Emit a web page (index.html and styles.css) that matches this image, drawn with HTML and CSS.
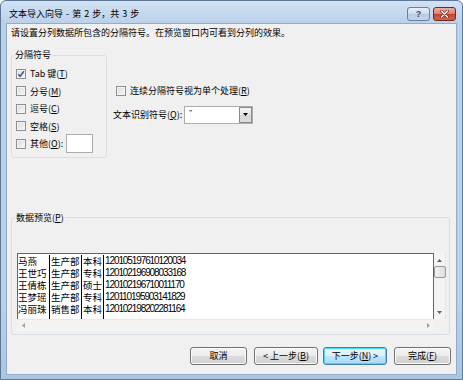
FILE: index.html
```html
<!DOCTYPE html>
<html>
<head>
	<meta charset="utf-8">
	<link rel="stylesheet" href="styles.css">
</head>
<body>
	<div class="window">
		<div class="titlebar">
			<span class="title">文本导入向导 - 第 2 步，共 3 步</span>
			<div class="captionButtons">
				<span class="cbtn help">?</span>
				<span class="cbtn close">
					<svg width="9" height="8" viewBox="0 0 9 8"><path d="M1.5 1 L7.5 7 M7.5 1 L1.5 7" stroke="#6a2a22" stroke-width="2.6" stroke-linecap="round"/><path d="M1.5 1 L7.5 7 M7.5 1 L1.5 7" stroke="#fff" stroke-width="1.4" stroke-linecap="round"/></svg>
				</span>
			</div>
		</div>

		<div class="client">
			<p class="desc">请设置分列数据所包含的分隔符号。在预览窗口内可看到分列的效果。</p>

			<div class="topSection">
				<fieldset class="group delimiters">
					<legend>分隔符号</legend>
					<label class="opt"><span class="cb"><svg width="8" height="8" viewBox="0 0 8 8"><path d="M1.2 4.2 L3.2 6.3 L6.9 1.2" fill="none" stroke="#3d5b91" stroke-width="1.5"/></svg></span>Tab 键(<u>T</u>)</label>
					<label class="opt"><span class="cb"></span>分号(<u>M</u>)</label>
					<label class="opt"><span class="cb"></span>逗号(<u>C</u>)</label>
					<label class="opt"><span class="cb"></span>空格(<u>S</u>)</label>
					<label class="opt"><span class="cb"></span>其他(<u>O</u>):<span class="textbox"></span></label>
				</fieldset>

				<div class="sideOptions">
					<label class="opt consecutive"><span class="cb"></span>连续分隔符号视为单个处理(<u>R</u>)</label>
					<div class="qualifier">
						<span>文本识别符号(<u>Q</u>):</span>
						<div class="combo">
							<span class="comboValue">"</span>
							<span class="comboDrop"><svg width="5" height="3" viewBox="0 0 5 3"><path d="M0 0 H5 L2.5 3 Z" fill="#000"/></svg></span>
						</div>
					</div>
				</div>
			</div>

			<fieldset class="group preview">
				<legend>数据预览(<u>P</u>)</legend>
				<div class="previewBox">
					<div class="previewMain">
						<div class="dataArea">
							<div class="col c1"><div>马燕</div><div>王世巧</div><div>王倩栋</div><div>王梦瑶</div><div>冯丽珠</div></div>
							<div class="col c2"><div>生产部</div><div>生产部</div><div>生产部</div><div>生产部</div><div>销售部</div></div>
							<div class="col c3"><div>本科</div><div>专科</div><div>硕士</div><div>专科</div><div>本科</div></div>
							<div class="col c4"><div>120105197610120034</div><div>120102196908033168</div><div>120102196710011170</div><div>120110195903141829</div><div>120102198202281164</div></div>
						</div>
						<div class="vscroll">
							<svg width="5" height="3" viewBox="0 0 5 3"><path d="M0 3 H5 L2.5 0 Z" fill="#606060"/></svg>
							<span class="thumb"></span>
							<span class="track"></span>
							<svg width="5" height="3" viewBox="0 0 5 3"><path d="M0 0 H5 L2.5 3 Z" fill="#606060"/></svg>
						</div>
					</div>
					<div class="hscrollRow">
						<div class="hscroll">
							<svg width="3" height="5" viewBox="0 0 3 5"><path d="M3 0 V5 L0 2.5 Z" fill="#a0a0a0"/></svg>
							<svg width="3" height="5" viewBox="0 0 3 5"><path d="M0 0 V5 L3 2.5 Z" fill="#a0a0a0"/></svg>
						</div>
						<div class="corner"></div>
					</div>
				</div>
			</fieldset>

			<div class="buttons">
				<button class="btn narrow">取消</button>
				<button class="btn">&lt; 上一步(<u>B</u>)</button>
				<button class="btn default">下一步(<u>N</u>) &gt;</button>
				<button class="btn narrow">完成(<u>F</u>)</button>
			</div>
		</div>
	</div>
</body>
</html>
```

FILE: styles.css
```css
body {
	margin: 0;
	font-family: "Noto Sans CJK SC", "Liberation Sans", sans-serif;
	font-size: 9px;
	color: #000;
}

.window {
	width: 463px;
	height: 380px;
	box-sizing: border-box;
	border: 1px solid #5f7796;
	border-radius: 6px 6px 0 0;
	background: linear-gradient(#d3e2f4, #bad1ea 22px, #b9d1ea 300px, #aac6e2);
	padding: 0 5px 4px 6px;
	display: flex;
	flex-direction: column;
}

.titlebar {
	height: 22px;
	box-sizing: border-box;
	padding-top: 4px;
	display: flex;
	align-items: center;
	justify-content: space-between;
}

.title {
	margin-left: 2px;
	line-height: 12px;
	word-spacing: 1px;
}

.captionButtons {
	display: flex;
	gap: 3px;
	margin-right: 1px;
}

.cbtn {
	width: 23px;
	height: 14px;
	box-sizing: border-box;
	border: 1px solid #6d7f98;
	border-radius: 3px;
	display: flex;
	align-items: center;
	justify-content: center;
}

.help {
	background: linear-gradient(#e6eef8, #cddcee 50%, #b6cbe3 51%, #c3d5ea);
	color: #3a4a60;
	font-family: "Liberation Sans", sans-serif;
	font-weight: bold;
	font-size: 9px;
	line-height: 12px;
}

.close {
	border-color: #6b2a23;
	background: linear-gradient(#eab1a6, #d77e6c 50%, #c6412e 51%, #d2624d);
}

.client {
	flex: 1;
	background: #f0f0f0;
	border: 1px solid #95aac4;
	margin-left: -1px;
	padding: 3px 5px 0 4px;
	display: flex;
	flex-direction: column;
}

.desc {
	margin: 0;
	line-height: 12px;
}

.topSection {
	display: flex;
	margin-top: 10px;
}

.group {
	margin: 0;
	border: 1px solid #d5dfe5;
	border-radius: 3px;
	min-width: 0;
}

.group legend {
	padding: 0 1px;
	margin-left: -2px;
	line-height: 12px;
}

.delimiters {
	width: 96px;
	box-sizing: border-box;
	padding: 4px 2px 4px 4px;
}

.opt {
	height: 17.5px;
	display: flex;
	align-items: center;
	white-space: nowrap;
}

.cb {
	width: 10px;
	height: 10px;
	box-sizing: border-box;
	border: 1px solid #8f8f8f;
	background: linear-gradient(135deg, #dadada, #f8f8f8);
	box-shadow: inset 0 0 0 1px #f4f4f4;
	margin-right: 4px;
	display: flex;
	align-items: center;
	justify-content: center;
}

.textbox {
	width: 27px;
	height: 19px;
	box-sizing: border-box;
	border: 1px solid #abadb3;
	background: #fff;
	margin-left: 3px;
}

.sideOptions {
	margin-left: 6px;
	padding-top: 33px;
}

.consecutive {
	padding-left: 3px;
}

.qualifier {
	display: flex;
	align-items: center;
	margin-top: 6px;
}

.combo {
	width: 69px;
	height: 18px;
	box-sizing: border-box;
	border: 1px solid #abadb3;
	background: #fff;
	margin-left: 2px;
	display: flex;
	justify-content: space-between;
}

.comboValue {
	padding-left: 4px;
	line-height: 11px;
	font-family: "Liberation Sans", sans-serif;
	font-size: 8px;
}

.comboDrop {
	width: 13px;
	box-sizing: border-box;
	border: 1px solid #8a8a8a;
	background: linear-gradient(#f4f4f4, #e6e6e6 50%, #d6d6d6 51%, #dedede);
	display: flex;
	align-items: center;
	justify-content: center;
}

.preview {
	margin: 54px 1px 0 0;
	padding: 29px 2px 3px 5px;
}

.previewBox {
	display: flex;
	flex-direction: column;
	width: 429px;
}

.previewMain {
	display: flex;
}

.dataArea {
	flex: 1;
	height: 66px;
	box-sizing: border-box;
	border: 1px solid #646464;
	border-bottom: none;
	background: #fff;
	display: flex;
	padding-top: 1px;
}

.col {
	font-size: 9.5px;
	line-height: 12px;
	white-space: nowrap;
	padding-left: 1px;
	box-sizing: border-box;
}

.c1 { width: 32px; border-right: 1px solid #000; padding-left: 0; }
.c2 { width: 32px; border-right: 1px solid #000; }
.c3 { width: 22px; border-right: 1px solid #000; }

.c4 {
	flex: 1;
	font-family: "Liberation Sans", sans-serif;
	font-size: 10px;
	letter-spacing: -1.1px;
}

.vscroll {
	width: 12px;
	box-sizing: border-box;
	background: #f3f3f3;
	border-right: 1px solid #e6e6e6;
	display: flex;
	flex-direction: column;
	align-items: center;
	padding: 6px 0 5px;
}

.thumb {
	width: 12px;
	height: 12px;
	box-sizing: border-box;
	margin-top: 4px;
	border: 1px solid #979797;
	border-radius: 2px;
	background: linear-gradient(90deg, #f2f2f2, #dddddd);
}

.track {
	flex: 1;
}

.hscrollRow {
	display: flex;
	height: 12px;
}

.hscroll {
	flex: 1;
	background: #f3f3f3;
	border-top: 1px solid #e8e8e8;
	display: flex;
	align-items: center;
	justify-content: space-between;
	padding: 0 4px 0 5px;
}

.corner {
	width: 12px;
	background: #f0f0f0;
}

.buttons {
	display: flex;
	justify-content: flex-end;
	gap: 7px;
	margin-top: 12px;
}

.btn {
	width: 64px;
	height: 18px;
	box-sizing: border-box;
	padding: 0;
	border: 1px solid #707070;
	border-radius: 3px;
	background: linear-gradient(#f3f3f3, #ebebeb 50%, #dddddd 51%, #cfcfcf);
	box-shadow: inset 0 0 0 1px #fcfcfc;
	font-family: "Noto Sans CJK SC", sans-serif;
	font-size: 9px;
	line-height: 14px;
	color: #000;
}

.narrow {
	width: 57px;
}

.default {
	border-color: #3c7fb1;
	box-shadow: inset 0 0 0 1px #48d8fb;
	background: linear-gradient(#eaf6fd, #d9f0fc 50%, #bee6fd 51%, #a7d9f5);
	margin-left: -2px;
}
```
